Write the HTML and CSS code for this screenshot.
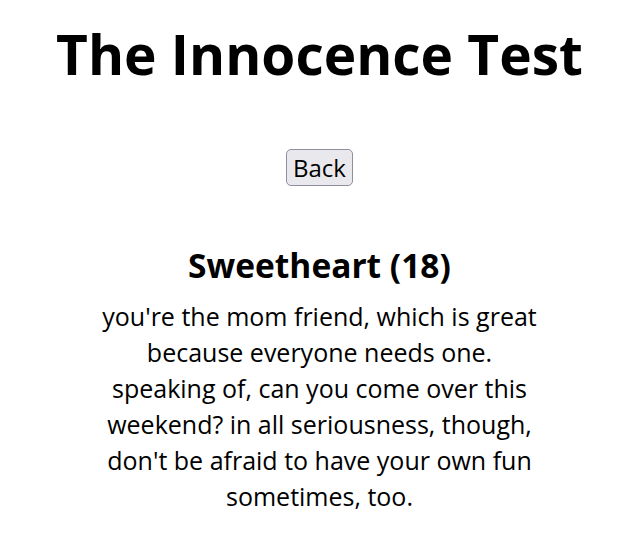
FILE: index.html
```html
<!DOCTYPE html>
<html>
<head>
<meta charset="utf-8">
<link rel="stylesheet" href="styles.css">
</head>
<body>
<main class="page">
  <h1 class="title">The Innocence Test</h1>
  <button class="back">Back</button>
  <section class="result">
    <h2 class="result-name">Sweetheart (18)</h2>
    <p class="result-text">you're the mom friend, which is great because everyone needs one. speaking of, can you come over this weekend? in all seriousness, though, don't be afraid to have your own fun sometimes, too.</p>
  </section>
</main>
</body>
</html>
```
FILE: styles.css
```css
body {
  margin: 0;
  background: #fff;
  color: #000;
  font-family: "Open Sans", "Noto Sans", sans-serif;
}
.page {
  display: flex;
  flex-direction: column;
  align-items: center;
  padding: 0 4px 0 12px;
}
.title {
  margin: 18px 0 0;
  font-size: 55px;
  font-weight: 700;
  line-height: 72px;
}
.back {
  margin-top: 59px;
  font-family: inherit;
  font-size: 24px;
  padding: 0 6px;
  height: 37px;
  background: #e9e9ed;
  border: 1px solid #8f8f9d;
  border-radius: 5px;
  color: #000;
}
.result {
  margin-top: 59px;
  width: 450px;
  text-align: center;
}
.result-name {
  margin: 0;
  font-size: 33.5px;
  line-height: 40px;
  font-weight: 700;
}
.result-text {
  margin: 13px 0 0;
  font-size: 25px;
  line-height: 36px;
}
```
